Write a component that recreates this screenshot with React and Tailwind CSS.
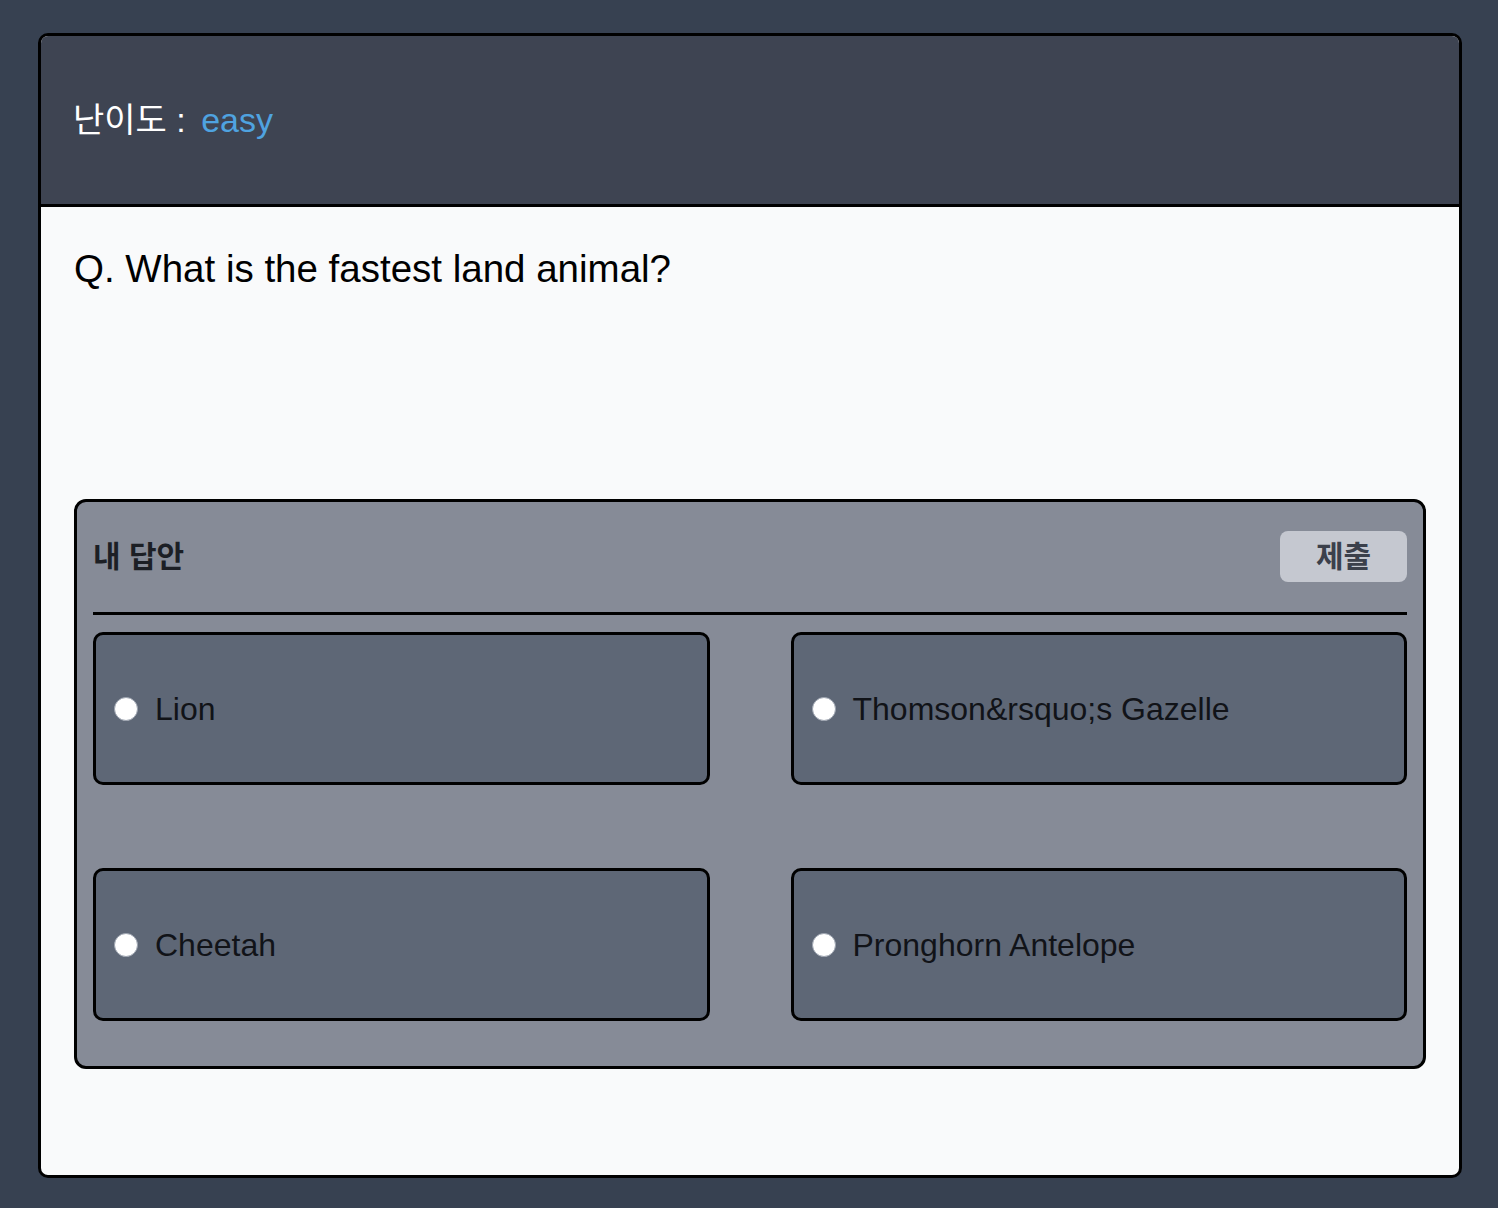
const options = ['Lion', 'Thomson&rsquo;s Gazelle', 'Cheetah', 'Pronghorn Antelope']

export default function App() {
  return (
    <div
      className="h-[1208px] bg-[#374151] pt-[33px] pl-[38px] pr-[36px]"
      style={{ fontFamily: '"Liberation Sans", "Noto Sans CJK KR", sans-serif' }}
    >
      <div className="h-[1145px] overflow-hidden rounded-[10px] border-[3px] border-black bg-[#f9fafb]">
        {/* header */}
        <div className="flex h-[171px] items-center border-b-[3px] border-black bg-[#3e4452] px-[32px]">
          <p className="text-[34px] text-white">
            난이도 : <span className="ml-[6px] text-[#4fa3e0]">easy</span>
          </p>
        </div>

        <div className="px-[33px] pt-[37px]">
          <h1 className="text-[38.5px] leading-[50px] text-black">Q. What is the fastest land animal?</h1>

          {/* answer panel */}
          <div className="mt-[205px] rounded-[12px] border-[3px] border-black bg-[#868b97] px-[16px] pt-[29px] pb-[45px]">
            <div className="flex items-center justify-between border-b-[3px] border-black pb-[30px]">
              <h2 className="text-[30px] font-bold text-[#1c1f25]">내 답안</h2>
              <button className="h-[51px] w-[127px] rounded-[8px] bg-[#c5c8d0] text-[30px] font-bold text-[#3b404b]">
                제출
              </button>
            </div>
            <div className="mt-[17px] grid grid-cols-2 gap-x-[81px] gap-y-[83px]">
              {options.map((o) => (
                <label
                  key={o}
                  className="flex h-[153px] items-center gap-[17px] rounded-[10px] border-[3px] border-black bg-[#5e6776] px-[18px]"
                >
                  <span className="h-[24px] w-[24px] shrink-0 rounded-full border border-[#9ca3af] bg-white" />
                  <span className="text-[32px] text-[#111318]">{o}</span>
                </label>
              ))}
            </div>
          </div>
        </div>
      </div>
    </div>
  )
}
